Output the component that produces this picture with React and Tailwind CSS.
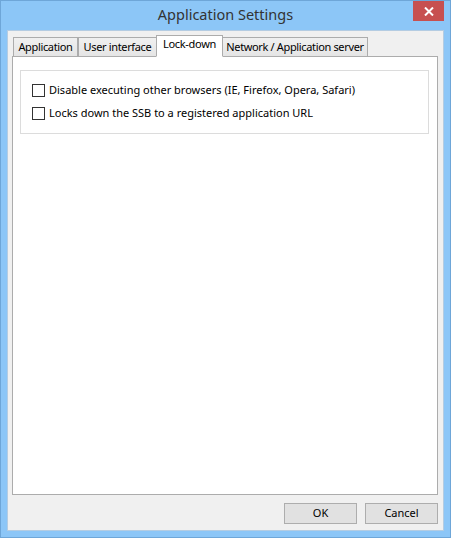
import React from "react";

const font = { fontFamily: '"Noto Sans", "Open Sans", sans-serif' };

function Tab({ label, selected, w }) {
  if (selected) {
    return (
      <div
        className={`${w} shrink-0 whitespace-nowrap h-[22px] -mb-px relative z-10 bg-white border border-[#acacac] border-b-white flex items-center justify-center text-[11px] tracking-[-0.3px] text-black -mx-px`}
      >
        <span className="-mt-[3px]">{label}</span>
      </div>
    );
  }
  return (
    <div
      className={`${w} shrink-0 whitespace-nowrap h-[19px] bg-gradient-to-b from-[#f0f0f0] to-[#e5e5e5] border border-[#acacac] border-b-0 flex items-center justify-center text-[11px] tracking-[-0.35px] text-black`}
    >
      <span>{label}</span>
    </div>
  );
}

function Check({ label }) {
  return (
    <div className="flex items-center h-[23px]">
      <div className="w-[13px] h-[13px] border border-[#333] bg-white shrink-0" />
      <span className="ml-[4px] text-[11px] text-black whitespace-nowrap">{label}</span>
    </div>
  );
}

export default function App() {
  return (
    <div
      style={font}
      className="w-[451px] h-[538px] bg-[#8cc6f7] border border-[#6ea6d8] flex flex-col"
    >
      <div className="h-[29px] relative flex items-center justify-center">
        <span className="text-[14.5px] text-[#333] -mt-[1px]">Application Settings</span>
        <div className="absolute right-[6px] top-0 w-[31px] h-[20px] bg-[#c75050] flex items-center justify-center">
          <svg width="10" height="9" viewBox="0 0 10 9">
            <path d="M1 0.5 L9 8.5 M9 0.5 L1 8.5" stroke="white" strokeWidth="2" />
          </svg>
        </div>
      </div>
      <div className="ml-[6px] mr-[6px] h-[501px] bg-[#f0f0f0] border border-[#b4cce2] flex flex-col">
        <div className="pl-[4px] pr-[5px] pt-[4px] flex flex-col">
          <div className="flex items-end pl-[1px] h-[21px]">
            <Tab label="Application" w="w-[65px]" />
            <Tab label="User interface" w="w-[79px]" />
            <Tab label="Lock-down" selected w="w-[67px]" />
            <Tab label="Network / Application server" w="w-[146px]" />
          </div>
          <div className="h-[439px] bg-white border border-[#acacac] pt-[13px] pl-[7px] pr-[8px]">
            <div className="h-[64px] border border-[#dcdcdc] pl-[11px] pt-[8px] flex flex-col">
              <Check label="Disable executing other browsers (IE, Firefox, Opera, Safari)" />
              <Check label="Locks down the SSB to a registered application URL" />
            </div>
          </div>
        </div>
        <div className="flex justify-end gap-[8px] pr-[5px] mt-[8px]">
          <button className="w-[73px] h-[21px] bg-[#e1e1e1] border border-[#adadad] text-[11px] text-black">OK</button>
          <button className="w-[73px] h-[21px] bg-[#e1e1e1] border border-[#adadad] text-[11px] text-black">Cancel</button>
        </div>
      </div>
    </div>
  );
}
